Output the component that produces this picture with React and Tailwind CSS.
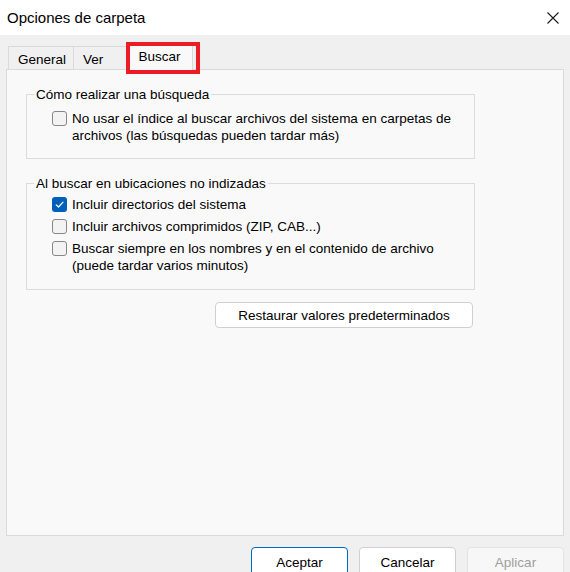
import React from "react";

function CheckBox({ checked }) {
  if (checked) {
    return (
      <span className="mt-[1px] flex h-[15px] w-[15px] shrink-0 items-center justify-center rounded-[3px] bg-[#005fb8]">
        <svg width="11" height="11" viewBox="0 0 10 10" fill="none">
          <path d="M2 5.3 L4.1 7.3 L8.2 2.9" stroke="#ffffff" strokeWidth="1.1" strokeLinecap="round" strokeLinejoin="round" />
        </svg>
      </span>
    );
  }
  return <span className="mt-[1px] h-[15px] w-[15px] shrink-0 rounded-[3px] border border-[#878787] bg-[#f3f3f3]" />;
}

function Option({ checked, children }) {
  return (
    <div className="flex items-start gap-[5px]">
      <CheckBox checked={checked} />
      <div>{children}</div>
    </div>
  );
}

export default function App() {
  return (
    <div
      className="h-[572px] w-[570px] overflow-hidden bg-[#f0f0f0] text-[13.5px] leading-[17px] text-black"
      style={{ fontFamily: '"Liberation Sans", Arial, sans-serif' }}
    >
      {/* Title bar */}
      <div className="flex h-[35px] items-center justify-between bg-white pl-[7px] pr-[11px]">
        <span className="text-[15px]">Opciones de carpeta</span>
        <svg width="12" height="12" viewBox="0 0 12 12">
          <path d="M0.5 0.5 L11.5 11.5 M11.5 0.5 L0.5 11.5" stroke="#1a1a1a" strokeWidth="1.1" />
        </svg>
      </div>

      <div className="px-[6px] pt-[7px]">
        {/* Tabs */}
        <div className="flex h-[27px] items-end pl-[2px]">
          <div className="flex h-[23px] w-[66px] items-center border-l border-r border-t border-[#d9d9d9] pl-[9px] pt-[3px]">
            General
          </div>
          <div className="flex h-[23px] w-[52px] items-center border-t border-[#d9d9d9] pl-[9px] pt-[3px]">
            Ver
          </div>
          <div className="relative z-10 -mb-px flex h-[28px] w-[67px] items-center justify-center border-l border-r border-t border-[#d9d9d9] bg-[#f9f9f9] pb-[1px]">
            Buscar
            <div className="absolute left-[-1px] top-[-1px] z-20 h-[32px] w-[74px] border-4 border-[#ec1c24]" />
          </div>
        </div>

        {/* Panel */}
        <div className="h-[467px] border border-[#dadada] bg-[#f9f9f9] pl-[19px] pt-[16px]">
          <fieldset className="w-[449px] border border-[#dcdcdc]">
            <legend className="ml-[7px] px-[2px]">Cómo realizar una búsqueda</legend>
            <div className="pb-[14px] pl-[25px] pt-[7px]">
              <Option>
                No usar el índice al buscar archivos del sistema en carpetas de
                <br />
                archivos (las búsquedas pueden tardar más)
              </Option>
            </div>
          </fieldset>

          <fieldset className="mt-[16px] w-[449px] border border-[#dcdcdc]">
            <legend className="ml-[7px] px-[2px]">Al buscar en ubicaciones no indizadas</legend>
            <div className="flex flex-col gap-[5px] pb-[15px] pl-[25px] pt-[4px]">
              <Option checked>Incluir directorios del sistema</Option>
              <Option>Incluir archivos comprimidos (ZIP, CAB...)</Option>
              <Option>
                Buscar siempre en los nombres y en el contenido de archivo
                <br />
                (puede tardar varios minutos)
              </Option>
            </div>
          </fieldset>

          <div className="mt-[12px] flex w-[449px] justify-end pr-[2px]">
            <button className="h-[26px] w-[258px] rounded-[4px] border border-[#d0d0d0] bg-white">
              Restaurar valores predeterminados
            </button>
          </div>
        </div>
      </div>

      {/* Dialog buttons */}
      <div className="mt-[11px] flex justify-end gap-[11px] pr-[6px]">
        <button className="h-[30px] w-[97px] rounded-[4px] border border-[#0067c0] bg-white">Aceptar</button>
        <button className="h-[30px] w-[97px] rounded-[4px] border border-[#d0d0d0] bg-white">Cancelar</button>
        <button className="h-[30px] w-[97px] rounded-[4px] border border-[#e3e3e3] bg-[#f7f7f7] text-[#9f9f9f]">
          Aplicar
        </button>
      </div>
    </div>
  );
}
